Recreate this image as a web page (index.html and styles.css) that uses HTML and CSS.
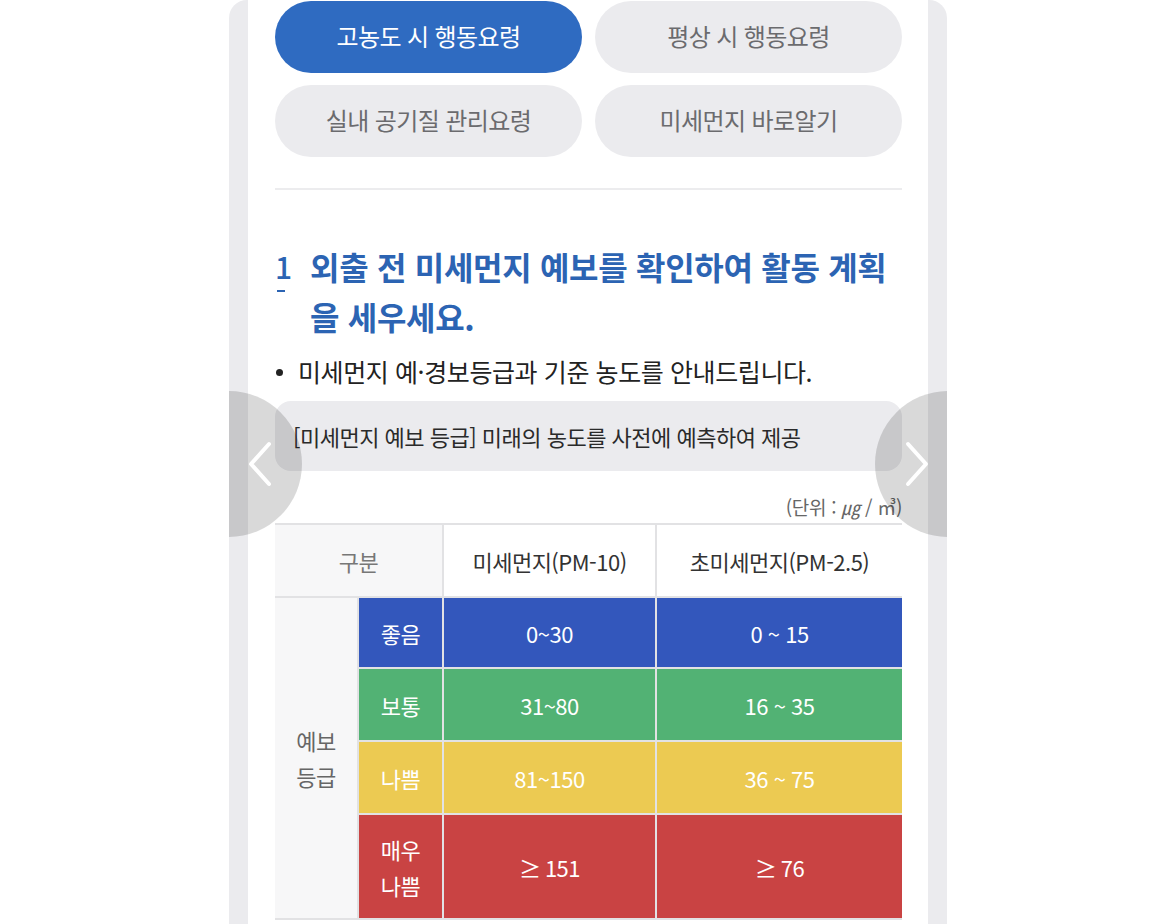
FILE: index.html
```html
<!DOCTYPE html>
<html lang="ko">
<head>
<meta charset="utf-8">
<title>미세먼지 행동요령</title>
<link rel="stylesheet" href="styles.css">
</head>
<body>
<div class="frame">
  <div class="panel">
    <div class="tabs">
      <button class="tab active">고농도 시 행동요령</button>
      <button class="tab">평상 시 행동요령</button>
      <button class="tab">실내 공기질 관리요령</button>
      <button class="tab">미세먼지 바로알기</button>
    </div>
    <hr class="divider">
    <h2 class="title"><span class="num">1</span><span class="title-text">외출 전 미세먼지 예보를 확인하여 활동 계획을 세우세요.</span></h2>
    <p class="bullet">미세먼지 예·경보등급과 기준 농도를 안내드립니다.</p>
    <div class="info">[미세먼지 예보 등급] 미래의 농도를 사전에 예측하여 제공</div>
    <p class="unit">(단위 : <i>㎍</i> / ㎥)</p>
    <table class="grade">
      <colgroup>
        <col class="c1"><col class="c2"><col class="c3"><col class="c4">
      </colgroup>
      <tr class="head">
        <th colspan="2" class="muted">구분</th>
        <th>미세먼지(PM-10)</th>
        <th>초미세먼지(PM-2.5)</th>
      </tr>
      <tr class="good">
        <td rowspan="4" class="side">예보<br>등급</td>
        <td>좋음</td><td>0~30</td><td>0 ~ 15</td>
      </tr>
      <tr class="normal"><td>보통</td><td>31~80</td><td>16 ~ 35</td></tr>
      <tr class="bad"><td>나쁨</td><td>81~150</td><td>36 ~ 75</td></tr>
      <tr class="worst"><td>매우<br>나쁨</td><td>≥ 151</td><td>≥ 76</td></tr>
    </table>
  </div>
  <div class="nav prev"><svg viewBox="0 0 26 48" width="26" height="48"><path d="M22 4 L4 24 L22 44" fill="none" stroke="#fff" stroke-width="4" stroke-linecap="round" stroke-linejoin="round"/></svg></div>
  <div class="nav next"><svg viewBox="0 0 26 48" width="26" height="48"><path d="M4 4 L22 24 L4 44" fill="none" stroke="#fff" stroke-width="4" stroke-linecap="round" stroke-linejoin="round"/></svg></div>
</div>
</body>
</html>
```
FILE: styles.css
```css
html, body {
  margin: 0;
  padding: 0;
  background: #fff;
  height: 924px;
  overflow: hidden;
}
body {
  font-family: "Noto Sans CJK KR", "Noto Sans", sans-serif;
  color: #222;
}
.frame {
  position: relative;
  margin-left: 229px;
  width: 718px;
  min-height: 1000px;
  background: #ebebee;
  border-radius: 18px 18px 0 0;
  overflow: hidden;
}
.panel {
  margin: 0 19px;
  background: #fff;
  min-height: 1000px;
  padding: 1px 26px 0 27px;
}
.tabs {
  display: grid;
  grid-template-columns: 1fr 1fr;
  gap: 12px 13px;
}
.tab {
  height: 72px;
  border: none;
  border-radius: 36px;
  background: #ebebee;
  color: #6b6b6e;
  font-family: inherit;
  font-size: 24px;
  letter-spacing: -0.6px;
  padding: 0 0 4px;
}
.tab.active {
  background: #2f6bc1;
  color: #fff;
}
.divider {
  border: none;
  height: 2px;
  background: #ececee;
  margin: 31px 0 0;
}
.title {
  display: flex;
  margin: 51px 0 0;
  font-size: 32px;
  line-height: 50px;
  font-weight: 700;
  color: #2c64b3;
  letter-spacing: -0.3px;
}
.num {
  position: relative;
  flex: none;
  width: 35px;
  font-weight: 500;
  font-size: 30px;
}
.num::after {
  content: "";
  position: absolute;
  left: 2px;
  top: 49px;
  width: 8px;
  height: 2px;
  background: #2c64b3;
}
.title-text {
  flex: 1;
  word-break: break-all;
}
.bullet {
  margin: 12px 0 0;
  font-size: 25px;
  line-height: 36px;
  letter-spacing: -0.4px;
  color: #222;
  padding-left: 23px;
  position: relative;
}
.bullet::before {
  content: "";
  position: absolute;
  left: 1px;
  top: 16px;
  width: 7px;
  height: 7px;
  border-radius: 50%;
  background: #222;
}
.info {
  margin-top: 12px;
  height: 70px;
  display: flex;
  align-items: center;
  padding-left: 18px;
  background: #ebebee;
  border-radius: 16px;
  font-size: 22px;
  letter-spacing: -0.5px;
  color: #2a2a2a;
}
.unit {
  margin: 20px 0 0;
  text-align: right;
  font-size: 19px;
  line-height: 32px;
  color: #666;
  letter-spacing: -0.3px;
}
.unit i {
  font-style: italic;
}
.grade {
  width: 100%;
  border-collapse: collapse;
  table-layout: fixed;
  border-top: 2px solid #e6e6e8;
  border-bottom: 2px solid #e6e6e8;
}
.c1 { width: 83px; }
.c2 { width: 85px; }
.c3 { width: 213px; }
.grade th, .grade td {
  border: 2px solid #e2e2e4;
  text-align: center;
  padding: 0;
  font-size: 22px;
  letter-spacing: -0.5px;
}
.grade tr > :first-child { border-left: none; }
.grade tr > :last-child { border-right: none; }
.grade th {
  font-weight: 400;
  height: 71px;
  color: #333;
  background: #fff;
}
.grade th.muted {
  background: #f7f7f8;
  color: #777;
}
.grade td {
  color: #fff;
}
.grade td.side {
  background: #f7f7f8;
  color: #666;
  line-height: 36px;
  border-left: none;
}
.good td { background: #3357bc; height: 69px; }
.normal td { background: #52b274; height: 71px; }
.bad td { background: #ecca52; height: 71px; }
.worst td { background: #c94343; height: 103px; line-height: 36px; }
.nav {
  position: absolute;
  top: 391px;
  width: 146px;
  height: 146px;
  border-radius: 50%;
  background: rgba(0, 0, 0, 0.15);
  display: flex;
  align-items: center;
  box-sizing: border-box;
}
.nav.prev {
  left: -73px;
  justify-content: flex-end;
  padding-right: 29px;
}
.nav.next {
  left: 646px;
  justify-content: flex-start;
  padding-left: 29px;
}
```
